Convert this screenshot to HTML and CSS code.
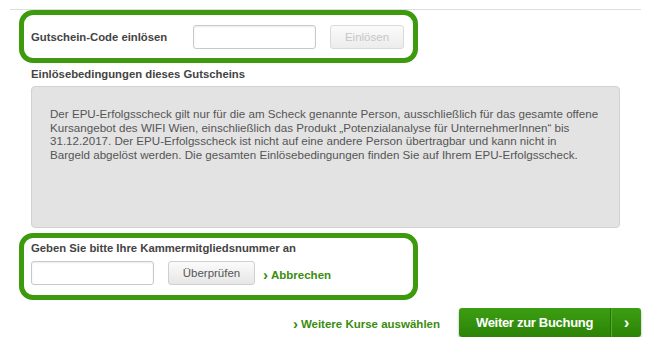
FILE: index.html
```html
<!DOCTYPE html>
<html lang="de">
<head>
<meta charset="utf-8">
<link rel="stylesheet" href="styles.css">
</head>
<body>
<div class="page">
  <div class="topline"></div>
  <div class="hlbox box1">
    <span class="lbl lbl1">Gutschein-Code einlösen</span>
    <input class="field" type="text">
    <button class="btn btn-disabled" disabled>Einlösen</button>
  </div>
  <div class="section">
    <h3 class="lbl heading">Einlösebedingungen dieses Gutscheins</h3>
    <div class="terms">Der EPU-Erfolgsscheck gilt nur für die am Scheck genannte Person, ausschließlich für das gesamte offene<br>Kursangebot des WIFI Wien, einschließlich das Produkt „Potenzialanalyse für UnternehmerInnen“ bis<br>31.12.2017. Der EPU-Erfolgsscheck ist nicht auf eine andere Person übertragbar und kann nicht in<br>Bargeld abgelöst werden. Die gesamten Einlösebedingungen finden Sie auf Ihrem EPU-Erfolgsscheck.</div>
  </div>
  <div class="hlbox box2">
    <div class="lbl">Geben Sie bitte Ihre Kammermitgliedsnummer an</div>
    <div class="row">
      <input class="field" type="text">
      <button class="btn btn-check">Überprüfen</button>
      <a class="link" href="#"><span class="chev">›</span>Abbrechen</a>
    </div>
  </div>
  <div class="footer">
    <a class="link link-more" href="#"><span class="chev">›</span>Weitere Kurse auswählen</a>
    <a class="cta" href="#"><span class="cta-main">Weiter zur Buchung</span><span class="cta-arrow">›</span></a>
  </div>
</div>
</body>
</html>
```
FILE: styles.css
```css
* { box-sizing: border-box; }
html, body { margin: 0; padding: 0; background: #fff; }
body { font-family: "Liberation Sans", Arial, sans-serif; font-size: 11.5px; color: #444; }
.page { padding-top: 9px; width: 660px; }
.topline { height: 1px; background: #dedede; margin: 0 19px 0 10px; }
.hlbox {
  border: 5px solid #3c9a0c;
  border-radius: 14px;
  margin-left: 19px;
  width: 399px;
}
.box1 { height: 53px; display: flex; align-items: center; padding: 1px 0 0 7px; }
.lbl { font-weight: bold; font-size: 11.3px; color: #444; line-height: 14px; margin: 0; }
.lbl1 { width: 162px; }
.field {
  width: 123px; height: 24px;
  border: 1px solid #c9c9c9; border-radius: 3px;
  box-shadow: inset 0 1px 2px rgba(0,0,0,0.08);
  background: #fff; margin: 0; padding: 0 4px;
}
.btn {
  height: 24px; margin: 0 0 0 14px; padding: 0;
  border: 1px solid #cfcfcf; border-radius: 3px;
  background: linear-gradient(#fbfbfb, #e6e6e6);
  font-family: "Liberation Sans", Arial, sans-serif; font-size: 11.5px;
}
.btn-disabled { width: 74px; color: #c6c6c6; border-color: #dadada; background: linear-gradient(#fbfbfb, #ececec); }
.btn-check { width: 87px; color: #555; }
.section { padding-left: 31px; }
.heading { margin-top: 4px; }
.terms {
  margin-top: 5px;
  width: 589px; height: 142px;
  background: #e3e3e3;
  border: 1px solid #d2d2d2; border-radius: 4px;
  padding: 20px 10px 0 18px;
  color: #555; font-size: 11.6px; line-height: 13.5px;
}
.box2 { margin-top: 5px; height: 67px; padding: 3px 0 0 7px; }
.row { display: flex; align-items: center; margin-top: 6px; }
.link { color: #3a8c10; font-weight: bold; text-decoration: none; font-size: 11.5px; }
.row .link { margin-left: 8px; }
.chev { font-size: 15px; margin-right: 3px; font-weight: bold; position: relative; top: 1px; }
.footer { display: flex; align-items: center; justify-content: flex-end; margin: 8px 19px 0 0; }
.link-more { margin-right: 19px; }
.cta {
  display: flex; height: 29px; width: 182px;
  border-radius: 3px;
  background: linear-gradient(#3c9e12, #2c8307);
  box-shadow: 0 2px 3px rgba(0,0,0,0.3);
  color: #fff; font-weight: bold; text-decoration: none; font-size: 13px;
}
.cta-main { width: 152px; display: flex; align-items: center; justify-content: center; letter-spacing: -0.3px; border-right: 1px solid #27720a; }
.cta-arrow { flex: 1; display: flex; align-items: center; justify-content: center; border-left: 1px solid #52ab2c; font-size: 17px; }
```
